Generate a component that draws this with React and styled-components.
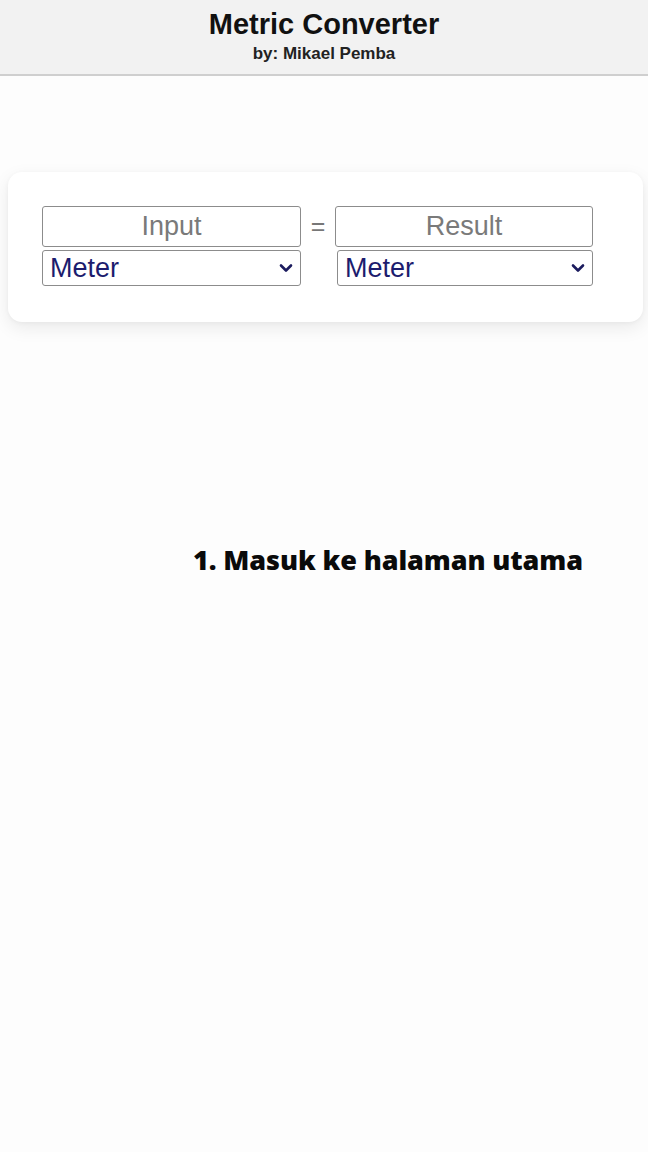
import React from 'react'
import styled, { createGlobalStyle } from 'styled-components'

const GlobalStyle = createGlobalStyle`
  html, body {
    margin: 0;
    padding: 0;
    background: #fdfdfd;
  }
  body {
    font-family: "Liberation Sans", Arial, sans-serif;
    min-height: 1152px;
  }
`

const units = ['Meter', 'Kilometer', 'Centimeter', 'Millimeter']

const Chevron = () => (
  <svg width="14" height="10" viewBox="0 0 14 10" aria-hidden="true">
    <path d="M2 2.5 L7 7.5 L12 2.5" fill="none" stroke="#1b1b5e" strokeWidth="2.6" strokeLinecap="round" strokeLinejoin="round" />
  </svg>
)

const UnitSelect = ({ shift }) => (
  <SelectWrap $shift={ shift }>
    <Select defaultValue="Meter" aria-label="Unit">
      { units.map(u => <option key={ u }>{ u }</option>) }
    </Select>
    <ChevronSpot><Chevron /></ChevronSpot>
  </SelectWrap>
)

const App = () => {
  return (
    <>
      <GlobalStyle />
      <Header>
        <Title>Metric Converter</Title>
        <Byline>by: Mikael Pemba</Byline>
      </Header>
      <Main>
        <Card>
          <Converter>
            <Field placeholder="Input" />
            <Equals>=</Equals>
            <Field placeholder="Result" readOnly />
            <UnitSelect />
            <span />
            <UnitSelect shift />
          </Converter>
        </Card>
        <Caption>1. Masuk ke halaman utama</Caption>
      </Main>
    </>
  )
}

const Header = styled.header`
  background: #f2f2f2;
  border-bottom: 2px solid #cfcfcf;
  height: 76px;
  display: flex;
  flex-direction: column;
  align-items: center;
  box-sizing: border-box;
  padding-top: 7px;
`

const Title = styled.h1`
  margin: 0;
  font-size: 29px;
  line-height: 34px;
  font-weight: 700;
  color: #111;
`

const Byline = styled.div`
  margin-top: 3px;
  font-size: 17px;
  line-height: 20px;
  font-weight: 700;
  color: #222;
`

const Main = styled.main`
  padding: 96px 5px 0 8px;
`

const Card = styled.section`
  background: #ffffff;
  border-radius: 14px;
  box-shadow: 0 6px 18px rgba(0, 0, 0, 0.08), 0 1px 4px rgba(0, 0, 0, 0.04);
  padding: 34px 0 37px 34px;
  height: 150px;
  box-sizing: border-box;
`

const Converter = styled.div`
  display: grid;
  grid-template-columns: 259px 34px 258px;
  row-gap: 3px;
  align-items: center;
`

const Field = styled.input`
  box-sizing: border-box;
  width: 100%;
  height: 41px;
  border: 1px solid #8c8c8c;
  border-radius: 3px;
  background: #fff;
  font-family: "Liberation Sans", Arial, sans-serif;
  font-size: 27px;
  text-align: center;
  color: #222;
  outline: none;
  &::placeholder {
    color: #7a7a7a;
  }
`

const Equals = styled.span`
  text-align: center;
  font-size: 25px;
  color: #777;
  line-height: 41px;
`

const SelectWrap = styled.div`
  position: relative;
  margin-left: ${ p => (p.$shift ? '2px' : '0') };
`

const Select = styled.select`
  appearance: none;
  box-sizing: border-box;
  width: 100%;
  height: 36px;
  border: 1px solid #8c8c8c;
  border-radius: 3px;
  background: #fff;
  padding: 0 0 0 7px;
  font-family: "Liberation Sans", Arial, sans-serif;
  font-size: 27px;
  color: #1c1c6e;
  outline: none;
`

const ChevronSpot = styled.span`
  position: absolute;
  right: 8px;
  top: 13px;
  display: flex;
  pointer-events: none;
`

const Caption = styled.p`
  margin: 220px 0 0 185px;
  font-family: "Open Sans", sans-serif;
  font-weight: 800;
  font-size: 27px;
  line-height: 36px;
  color: #0a0a0a;
  letter-spacing: -0.1px;
`

export default App
